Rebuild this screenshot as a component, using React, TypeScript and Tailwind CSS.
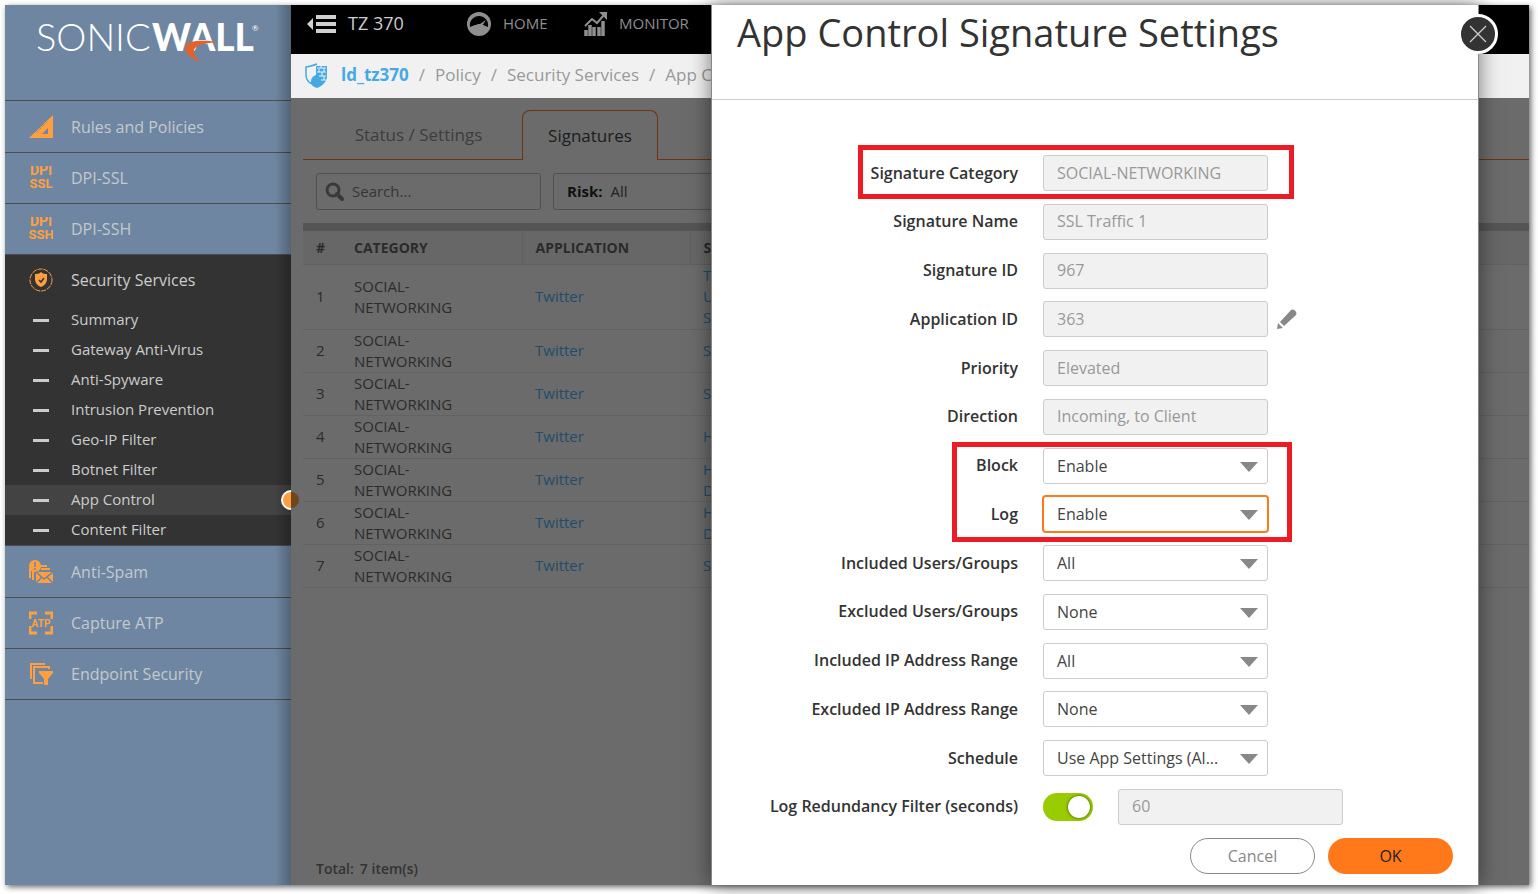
import type { ReactNode } from 'react';

type Row = { id: number; signature: string[] };

const rows: Row[] = [
  { id: 1, signature: ['T', 'U', 'S'] },
  { id: 2, signature: ['S'] },
  { id: 3, signature: ['S'] },
  { id: 4, signature: ['H'] },
  { id: 5, signature: ['H', 'D'] },
  { id: 6, signature: ['H', 'D'] },
  { id: 7, signature: ['S'] },
];

const services = [
  'Summary',
  'Gateway Anti-Virus',
  'Anti-Spyware',
  'Intrusion Prevention',
  'Geo-IP Filter',
  'Botnet Filter',
  'App Control',
  'Content Filter',
];

function Logo() {
  return (
    <svg width="228" height="64" viewBox="0 0 228 64" role="img" aria-label="SonicWall">
      <text x="-1" y="45" fill="#fff" fontFamily="Lato" fontSize="38" fontWeight="300">
        SONIC
      </text>
      <text x="115" y="45" fill="#fff" fontFamily="Lato" fontSize="37" fontWeight="900">
        WALL
      </text>
      <text x="215" y="25" fill="#fff" fontFamily="Lato" fontSize="8">
        ®
      </text>
      <path d="M181 36c-10-2-33-3-33 6 0 6 7 11 16 14-5-4-8-8-7-12 1-5 12-7 24-8z" fill="#e1632b" />
    </svg>
  );
}

function RulesIcon() {
  return (
    <svg width="24" height="24" viewBox="0 0 24 24" fill="#ff9f40">
      <path fillRule="evenodd" d="M24 0v23H0zM19 13l-6 6h6z" />
      <path d="M7 18 18 7" stroke="#6e86a1" strokeDasharray="1 1" />
    </svg>
  );
}

function DpiIcon({ bottom }: { bottom: string }) {
  return (
    <svg
      width="24"
      height="24"
      viewBox="0 0 24 24"
      fill="#ff9f40"
      fontFamily="Roboto"
      fontWeight="700"
      textAnchor="middle"
    >
      <text x="12" y="9" fontSize="14">
        DPI
      </text>
      <text x="12" y="22" fontSize="13">
        {bottom}
      </text>
    </svg>
  );
}

function ShieldIcon() {
  return (
    <svg width="24" height="24" viewBox="0 0 24 24" fill="none">
      <circle cx="12" cy="12" r="11" stroke="#ff9f40" strokeDasharray="5 1" />
      <path d="M12 4c2 2 4 2 6 2v5c0 4-3 7-6 8-3-1-6-4-6-8V6c2 0 4 0 6-2z" fill="#ff9f40" />
      <path d="m10 12 2 2 3-4" stroke="#333" strokeWidth="1.5" />
    </svg>
  );
}

function SpamIcon() {
  return (
    <svg width="24" height="24" viewBox="0 0 24 24" fill="none">
      <path d="M1 8v10M4 10v10M11 6h7M12 9h9" stroke="#ff9f40" strokeWidth="2" />
      <path d="M7 12h17v11H7z" fill="#ff9f40" />
      <path d="m7 12 8 7 9-7M7 23l6-6M24 23l-6-6" stroke="#6e86a1" strokeWidth="1.5" />
      <circle cx="6" cy="6" r="6" fill="#ff9f40" />
      <path d="M6 2v5M6 8v2" stroke="#6e86a1" strokeWidth="1.5" />
    </svg>
  );
}

function CaptureIcon() {
  return (
    <svg width="24" height="24" viewBox="0 0 24 24" fill="none">
      <path d="M1 8V2h7M16 2h7v6M23 15v7h-7M8 22H1v-7" stroke="#ff9f40" strokeWidth="3" />
      <text x="12" y="16" textAnchor="middle" fill="#ff9f40" fontFamily="Roboto" fontSize="10" fontWeight="700">
        ATP
      </text>
    </svg>
  );
}

function EndpointIcon() {
  return (
    <svg width="24" height="24" viewBox="0 0 24 24" fill="none">
      <path d="M2 17V2h14" stroke="#ff9f40" strokeWidth="2" />
      <path d="M20 7V5H5v16h9" stroke="#ff9f40" strokeWidth="2" />
      <path d="M10 9h14v2l-5 6v6h-4v-6l-5-6z" fill="#ff9f40" />
    </svg>
  );
}

function NavItem({ icon, label }: { icon: ReactNode; label: string }) {
  return (
    <a href="#" className="flex h-[51px] items-center gap-[18px] border-b border-[#4d4d4d] pl-6 text-[#c4c9cd]">
      {icon}
      {label}
    </a>
  );
}

function Sidebar() {
  return (
    <nav className="relative flex w-[286px] shrink-0 flex-col bg-[#6e86a1] text-[16px]">
      <div className="h-[96px] border-b border-[#4d4d4d] pt-px pl-8">
        <Logo />
      </div>
      <div className="pt-px">
        <NavItem icon={<RulesIcon />} label="Rules and Policies" />
        <NavItem icon={<DpiIcon bottom="SSL" />} label="DPI-SSL" />
        <NavItem icon={<DpiIcon bottom="SSH" />} label="DPI-SSH" />
      </div>
      <div className="border-b border-[#4d4d4d] bg-[#333] text-[#ccc]">
        <a href="#" className="flex h-[50px] items-center gap-[18px] pl-6">
          <ShieldIcon />
          Security Services
        </a>
        {services.map((name) => (
          <a
            key={name}
            href="#"
            className={`flex h-[30px] items-center gap-[22px] pl-7 text-[15px] ${name === 'App Control' ? 'bg-[#434343]' : ''}`}
          >
            <span className="h-[3px] w-4 bg-[#ccc]" />
            <span className="pb-[2px]">{name}</span>
          </a>
        ))}
      </div>
      <div className="pt-px">
        <NavItem icon={<SpamIcon />} label="Anti-Spam" />
        <NavItem icon={<CaptureIcon />} label="Capture ATP" />
        <NavItem icon={<EndpointIcon />} label="Endpoint Security" />
      </div>
      <div className="pointer-events-none absolute inset-y-0 right-0 w-4 bg-gradient-to-r from-transparent to-black/25" />
      <div className="absolute top-[485px] right-0 h-5 w-[10px] rounded-l-full border-2 border-r-0 border-white bg-[#ff9f40]" />
      <div className="absolute top-[487px] -right-2 h-4 w-2 rounded-r-full bg-[#6e471f]" />
    </nav>
  );
}

function TopBar() {
  return (
    <header className="flex h-[49px] items-start bg-black pt-[7px] pl-4 text-[15px] text-[#8f8f8f]">
      <button type="button" aria-label="Collapse menu" className="flex h-6 items-center">
        <svg width="29" height="20" viewBox="0 0 29 20" fill="#d0d0d0">
          <path d="M0 10 6 4v12zM9 1h20v4H9zM9 8h20v4H9zM9 15h20v4H9z" />
        </svg>
      </button>
      <span className="ml-3 w-[119px] text-[18px] leading-[22px] text-[#ccc]">TZ 370</span>
      <a href="#" className="flex h-6 w-[117px] items-center gap-3 leading-[22px]">
        <svg width="24" height="24" viewBox="0 0 24 24" fill="none">
          <circle cx="12" cy="12" r="12" fill="#8f8f8f" />
          <path d="M3 15C2 8 7 4 12 4s10 4 9 11l-5-2H8z" fill="#000" />
          <path d="M8 16c0-4 3-4 5-4l6-4-4 6c1 2-1 4-3 4s-4 0-4-2z" fill="#8f8f8f" />
        </svg>
        <span className="pb-[2px]">HOME</span>
      </a>
      <a href="#" className="flex h-6 items-center gap-3 leading-[22px]">
        <svg width="23" height="24" viewBox="0 0 23 24" fill="none" stroke="#8f8f8f">
          <path d="m1 14 7-7 5 4 7-8" strokeWidth="2" />
          <path d="M15 0h8v8z" fill="#8f8f8f" stroke="none" />
          <path d="M2 24v-6M6 24V13M10 24v-9M15 24v-9M19 24V9" strokeWidth="3.5" />
        </svg>
        <span className="pb-[2px]">MONITOR</span>
      </a>
    </header>
  );
}

function Breadcrumb() {
  return (
    <div className="flex h-[44px] items-center bg-[#f1f1f1] pb-[2px] pl-[14px] text-[17px] whitespace-nowrap text-[#999]">
      <svg width="22" height="25" viewBox="0 0 22 25" fill="none">
        <path d="M12 1C8 3 4 3 1 4v8c0 4 2 7 6 9" stroke="#44a9e4" strokeWidth="1.5" />
        <path d="M11 3h11v10c0 6-5 10-10 12-4-1-6-3-6-6 0-4 2-6 5-7z" fill="#44a9e4" />
        <path d="M12 5h9M12 9h9M14 13h7M16 3v2M19 5v4M14 6v3M17 9v4M19 13v4M16 17h5" stroke="#f1f1f1" />
      </svg>
      <a href="#" className="ml-[14px] font-bold text-[#44a9e4]">ld_tz370</a>
      <span className="mx-[10px]">/</span>
      <a href="#">Policy</a>
      <span className="mx-[10px]">/</span>
      <a href="#">Security Services</a>
      <span className="mx-[10px]">/</span>
      <a href="#">App Control</a>
    </div>
  );
}

function SignatureTable() {
  return (
    <table className="w-full table-fixed text-left text-[15px] leading-[21px] text-[#2b2b2b]">
      <colgroup>
        <col className="w-[38px]" />
        <col className="w-[181px]" />
        <col className="w-[168px]" />
        <col />
      </colgroup>
      <thead className="bg-[#676767] text-[14px]">
        <tr className="h-[33px] border-b border-[#606060]">
          <th className="pl-[13px]">#</th>
          <th className="border-r border-[#606060] pl-[13px]">CATEGORY</th>
          <th className="border-r border-[#606060] pl-[13px]">APPLICATION</th>
          <th className="pl-[13px]">SIGNATURE</th>
        </tr>
      </thead>
      <tbody>
        {rows.map((row) => (
          <tr key={row.id} className="border-b border-[#626262] first:h-[65px]">
            <td className="pl-[13px]">{row.id}</td>
            <td className="pl-[13px]">
              SOCIAL-
              <br />
              NETWORKING
            </td>
            <td className="pl-[13px]">
              <a href="#" className="text-[#1f4d6b]">Twitter</a>
            </td>
            <td className="pl-[13px] text-[#1f4d6b]">
              {row.signature.map((line, i) => (
                <div key={i}>{line}</div>
              ))}
            </td>
          </tr>
        ))}
      </tbody>
    </table>
  );
}

function Content() {
  return (
    <main className="flex flex-1 flex-col bg-[#6b6b6b] pt-3 pl-3">
      <div className="flex h-[50px] text-[17px]">
        <button type="button" className="w-[219px] border-b border-[#70330e] pl-3 text-[#3d3d3d]">
          Status / Settings
        </button>
        <button type="button" className="w-[136px] rounded-t-lg border border-b-0 border-[#70330e] text-[#1c1c1c]">
          Signatures
        </button>
        <div className="flex-1 border-b border-[#70330e]" />
      </div>
      <div className="flex h-[63px] items-center gap-3 pl-[13px] text-[15px]">
        <label className="flex h-[37px] w-[225px] items-center gap-2 rounded-[3px] border border-[#505050] pl-2">
          <svg width="19" height="19" viewBox="0 0 19 19" fill="none" stroke="#3a3a3a">
            <circle cx="8" cy="8" r="6" strokeWidth="3" />
            <path d="m12 12 5 5" strokeWidth="4" strokeLinecap="round" />
          </svg>
          <input
            type="text"
            aria-label="Search"
            placeholder="Search..."
            className="w-40 bg-transparent outline-none placeholder:text-[#363636]"
          />
        </label>
        <button
          type="button"
          className="flex h-[37px] w-[225px] items-center gap-2 rounded-[3px] border border-[#505050] pl-[13px] text-[#222]"
        >
          <span className="font-bold text-[#111]">Risk:</span> All
        </button>
      </div>
      <div className="h-[8px] bg-[#555]" />
      <SignatureTable />
      <div className="mt-auto flex h-[34px] items-center gap-[6px] pl-[13px] text-[14px] font-semibold text-[#333]">
        <span>Total:</span>
        <span>7 item(s)</span>
      </div>
    </main>
  );
}

function Highlight({ className }: { className: string }) {
  return <div className={`pointer-events-none absolute border-[5px] border-[#ed1c24] ${className}`} />;
}

type FieldProps = { id: string; label: string; children: ReactNode };

function Field({ id, label, children }: FieldProps) {
  return (
    <div className="relative flex h-9 items-center gap-[25px]">
      <label htmlFor={id} className="w-[306px] pb-px text-right font-semibold text-[#333]">
        {label}
      </label>
      {children}
    </div>
  );
}

function TextBox({ id, value, label }: { id: string; value: string; label?: string }) {
  return (
    <input
      id={id}
      type="text"
      aria-label={label}
      defaultValue={value}
      disabled
      className="h-9 w-[225px] rounded-[3px] border border-[#ccc] bg-[#f1f1f1] px-[13px] pb-px text-[#999]"
    />
  );
}

function SelectBox({ id, value, focused = false }: { id: string; value: string; focused?: boolean }) {
  return (
    <div className="relative">
      <select
        id={id}
        defaultValue={value}
        className={`h-9 w-[225px] appearance-none rounded-[3px] border bg-white px-[13px] text-[#444] outline-none ${
          focused ? 'border-[#ff791a] ring-1 ring-[#ff791a]' : 'border-[#ccc]'
        }`}
      >
        <option>{value}</option>
      </select>
      <svg
        width="18"
        height="10"
        viewBox="0 0 18 10"
        fill="#888"
        className="pointer-events-none absolute top-[14px] right-[10px]"
      >
        <path d="M0 0h18L9 10z" />
      </svg>
    </div>
  );
}

function SettingsDialog() {
  return (
    <div
      role="dialog"
      aria-labelledby="dialog-title"
      className="absolute inset-y-0 right-[50px] flex w-[768px] flex-col border-x border-[#888] bg-white text-[16px] shadow-[0_0_20px_rgba(0,0,0,0.5)]"
    >
      <div className="h-[95px] border-b border-[#ccc] pl-[25px]">
        <h1 id="dialog-title" className="text-[38px] leading-[54px] text-[#333]">
          App Control Signature Settings
        </h1>
      </div>
      <button
        type="button"
        aria-label="Close"
        className="absolute top-[9px] -right-[20px] flex size-10 items-center justify-center rounded-full border-3 border-white bg-[#333]"
      >
        <svg width="18" height="18" viewBox="0 0 18 18" stroke="#ccc" strokeWidth="1.25">
          <path d="m1 1 16 16M17 1 1 17" />
        </svg>
      </button>
      <form className="flex flex-1 flex-col pt-[55px]">
        <div className="flex flex-1 flex-col justify-between">
          <Field id="category" label="Signature Category">
            <TextBox id="category" value="SOCIAL-NETWORKING" />
            <Highlight className="-top-[10px] left-[146px] h-[54px] w-[436px]" />
          </Field>
          <Field id="name" label="Signature Name">
            <TextBox id="name" value="SSL Traffic 1" />
          </Field>
          <Field id="sig-id" label="Signature ID">
            <TextBox id="sig-id" value="967" />
          </Field>
          <Field id="app-id" label="Application ID">
            <TextBox id="app-id" value="363" />
            <button type="button" aria-label="Edit application" className="-ml-4">
              <svg width="20" height="20" viewBox="0 0 20 20" fill="#888">
                <path d="M0 20l1-6 5 5zM3 13 14 1c2-2 7 2 5 5L7 17z" />
              </svg>
            </button>
          </Field>
          <Field id="priority" label="Priority">
            <TextBox id="priority" value="Elevated" />
          </Field>
          <Field id="direction" label="Direction">
            <TextBox id="direction" value="Incoming, to Client" />
          </Field>
          <Field id="block" label="Block">
            <SelectBox id="block" value="Enable" />
            <Highlight className="-top-[6px] left-[240px] h-[100px] w-[340px]" />
          </Field>
          <Field id="log" label="Log">
            <SelectBox id="log" value="Enable" focused />
          </Field>
          <Field id="inc-users" label="Included Users/Groups">
            <SelectBox id="inc-users" value="All" />
          </Field>
          <Field id="exc-users" label="Excluded Users/Groups">
            <SelectBox id="exc-users" value="None" />
          </Field>
          <Field id="inc-ip" label="Included IP Address Range">
            <SelectBox id="inc-ip" value="All" />
          </Field>
          <Field id="exc-ip" label="Excluded IP Address Range">
            <SelectBox id="exc-ip" value="None" />
          </Field>
          <Field id="schedule" label="Schedule">
            <SelectBox id="schedule" value="Use App Settings (Al..." />
          </Field>
          <Field id="redundancy" label="Log Redundancy Filter (seconds)">
            <span className="relative flex h-7 w-[50px] items-center rounded-full bg-[#9c0]">
              <input
                id="redundancy"
                type="checkbox"
                role="switch"
                defaultChecked
                className="absolute inset-0 size-full cursor-pointer appearance-none"
              />
              <span className="pointer-events-none ml-[25px] size-[22px] rounded-full bg-white shadow-[0_0_3px_rgba(0,0,0,0.7)]" />
            </span>
            <TextBox id="seconds" value="60" label="Seconds" />
          </Field>
        </div>
        <div className="mt-[13px] mr-[25px] mb-[11px] flex justify-end gap-[13px]">
          <button type="button" className="h-9 w-[125px] rounded-full border border-[#888] pb-px text-[#888]">
            Cancel
          </button>
          <button type="button" className="h-9 w-[125px] rounded-full bg-[#ff791a] pb-px text-[#222]">
            OK
          </button>
        </div>
      </form>
    </div>
  );
}

export default function App() {
  return (
    <div className="flex min-h-screen bg-white pt-[5px] pr-[9px] pb-[9px] pl-[5px] font-['Open_Sans',sans-serif]">
      <div className="relative flex flex-1 shadow-[2px_2px_6px_rgba(0,0,0,0.6)]">
        <Sidebar />
        <div className="flex min-w-0 flex-1 flex-col">
          <TopBar />
          <Breadcrumb />
          <Content />
        </div>
        <SettingsDialog />
      </div>
    </div>
  );
}
